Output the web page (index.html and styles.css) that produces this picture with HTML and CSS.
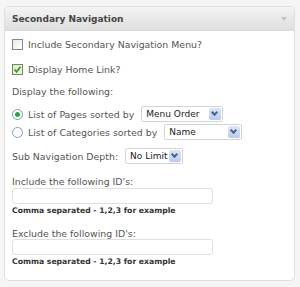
FILE: index.html
```html
<!DOCTYPE html>
<html lang="en">
<head>
    <meta charset="UTF-8">
    <title>Secondary Navigation</title>
    <link rel="stylesheet" href="styles.css">
</head>
<body>
    <!-- Widget box -->
    <div class="widget">
        <div class="widget-top">
            <span class="widget-title">Secondary Navigation</span>
            <span class="widget-toggle"></span>
        </div>

        <div class="widget-inside">
            <label class="row check-row">
                <span class="checkbox"></span>
                Include Secondary Navigation Menu?
            </label>
            <label class="row check-row second">
                <span class="checkbox checked">
                    <svg width="9" height="9" viewBox="0 0 9 9"><path d="M1.5 4.5 L3.6 6.8 L7.5 1.8" fill="none" stroke="#3a9a22" stroke-width="1.8"/></svg>
                </span>
                Display Home Link?
            </label>

            <p class="row">Display the following:</p>

            <div class="row radio-row first-radio">
                <span class="radio on"></span>
                List of Pages sorted by
                <span class="select sel-order">Menu Order<span class="sel-btn"></span></span>
            </div>
            <div class="row radio-row">
                <span class="radio"></span>
                List of Categories sorted by
                <span class="select sel-name">Name<span class="sel-btn"></span></span>
            </div>

            <div class="row depth-row">
                Sub Navigation Depth:
                <span class="select sel-depth">No Limit<span class="sel-btn"></span></span>
            </div>

            <p class="row field-label">Include the following ID's:</p>
            <div class="text-input"></div>
            <small class="hint">Comma separated - 1,2,3 for example</small>

            <p class="row field-label second">Exclude the following ID's:</p>
            <div class="text-input"></div>
            <small class="hint">Comma separated - 1,2,3 for example</small>
        </div>
    </div>
</body>
</html>
```

FILE: styles.css
```css
/* General styling */
body {
    margin: 0;
    padding: 6px 5px 5px 4px;
    background-color: #f5f5f5;
    font-family: "DejaVu Sans", Verdana, sans-serif;
    font-size: 9.4px;
    color: #555;
}

p {
    margin: 0;
}

/* Widget box */
.widget {
    background-color: #fff;
    border: 1px solid #dfdfdf;
    border-radius: 5px;
    height: 275px;
    box-sizing: border-box;
}

.widget-top {
    height: 23px;
    background: linear-gradient(#f4f4f4, #dedede);
    border-bottom: 1px solid #dcdcdc;
    border-radius: 5px 5px 0 0;
    display: flex;
    align-items: center;
    justify-content: space-between;
    padding: 0 7px;
}

.widget-title {
    font-weight: bold;
    color: #464646;
    font-size: 9px;
}

.widget-toggle {
    width: 0;
    height: 0;
    border-left: 3px solid transparent;
    border-right: 3px solid transparent;
    border-top: 4px solid #c4c4c4;
}

.widget-inside {
    padding: 6px 7px 0;
}

.row {
    display: flex;
    align-items: center;
    gap: 4px;
    height: 14px;
    white-space: nowrap;
}

.check-row {
    margin-bottom: 11px;
}

.check-row.second {
    margin-bottom: 8px;
}

/* Checkbox */
.checkbox {
    width: 9px;
    height: 9px;
    border: 1px solid #7a8a99;
    background: linear-gradient(135deg, #e8e8e3, #fff);
    display: inline-flex;
    align-items: center;
    justify-content: center;
    margin-right: 1px;
}

.checkbox.checked {
    border-color: #6c8a5c;
    background: linear-gradient(135deg, #dcebd0, #f5fbe9);
}

/* Radio buttons */
.radio-row {
    height: 16px;
    margin-bottom: 2px;
}

.first-radio {
    margin-top: 8px;
}

.radio {
    width: 9px;
    height: 9px;
    border: 1px solid #7f9db9;
    border-radius: 50%;
    background: #fff;
    display: inline-flex;
    align-items: center;
    justify-content: center;
    margin-right: 1px;
}

.radio.on::after {
    content: "";
    width: 5px;
    height: 5px;
    border-radius: 50%;
    background: #2fa34b;
}

/* Select boxes */
.select {
    box-sizing: border-box;
    height: 16px;
    border: 1px solid #d4d4d4;
    border-radius: 2px;
    background: #fff;
    display: inline-flex;
    align-items: center;
    justify-content: space-between;
    padding: 0 1px 0 4px;
    font-size: 9px;
    color: #222;
    margin-left: 3px;
    white-space: nowrap;
}

.sel-order {
    width: 82px;
}

.sel-name {
    width: 78px;
}

.sel-depth {
    width: 58px;
}

.sel-btn {
    width: 12px;
    height: 12px;
    flex-shrink: 0;
    background: linear-gradient(#dce6f8, #b8cbef);
    border-radius: 2px;
    position: relative;
}

.sel-btn::after {
    content: "";
    position: absolute;
    left: 3px;
    top: 2px;
    width: 3px;
    height: 3px;
    border-right: 2px solid #4d6185;
    border-bottom: 2px solid #4d6185;
    transform: rotate(45deg);
}

.depth-row {
    margin-top: 8px;
    height: 16px;
}

/* Text inputs */
.field-label {
    height: 12px;
    margin-top: 11px;
    margin-bottom: 1px;
}

.field-label.second {
    margin-top: 11px;
    margin-bottom: 0;
}

.text-input {
    width: 201px;
    height: 16px;
    box-sizing: border-box;
    border: 1px solid #dfdfdf;
    border-radius: 3px;
    background: #fff;
}

.hint {
    display: block;
    font-size: 7.7px;
    font-weight: bold;
    color: #333;
    margin-top: 2px;
    height: 10px;
    line-height: 10px;
}
```
